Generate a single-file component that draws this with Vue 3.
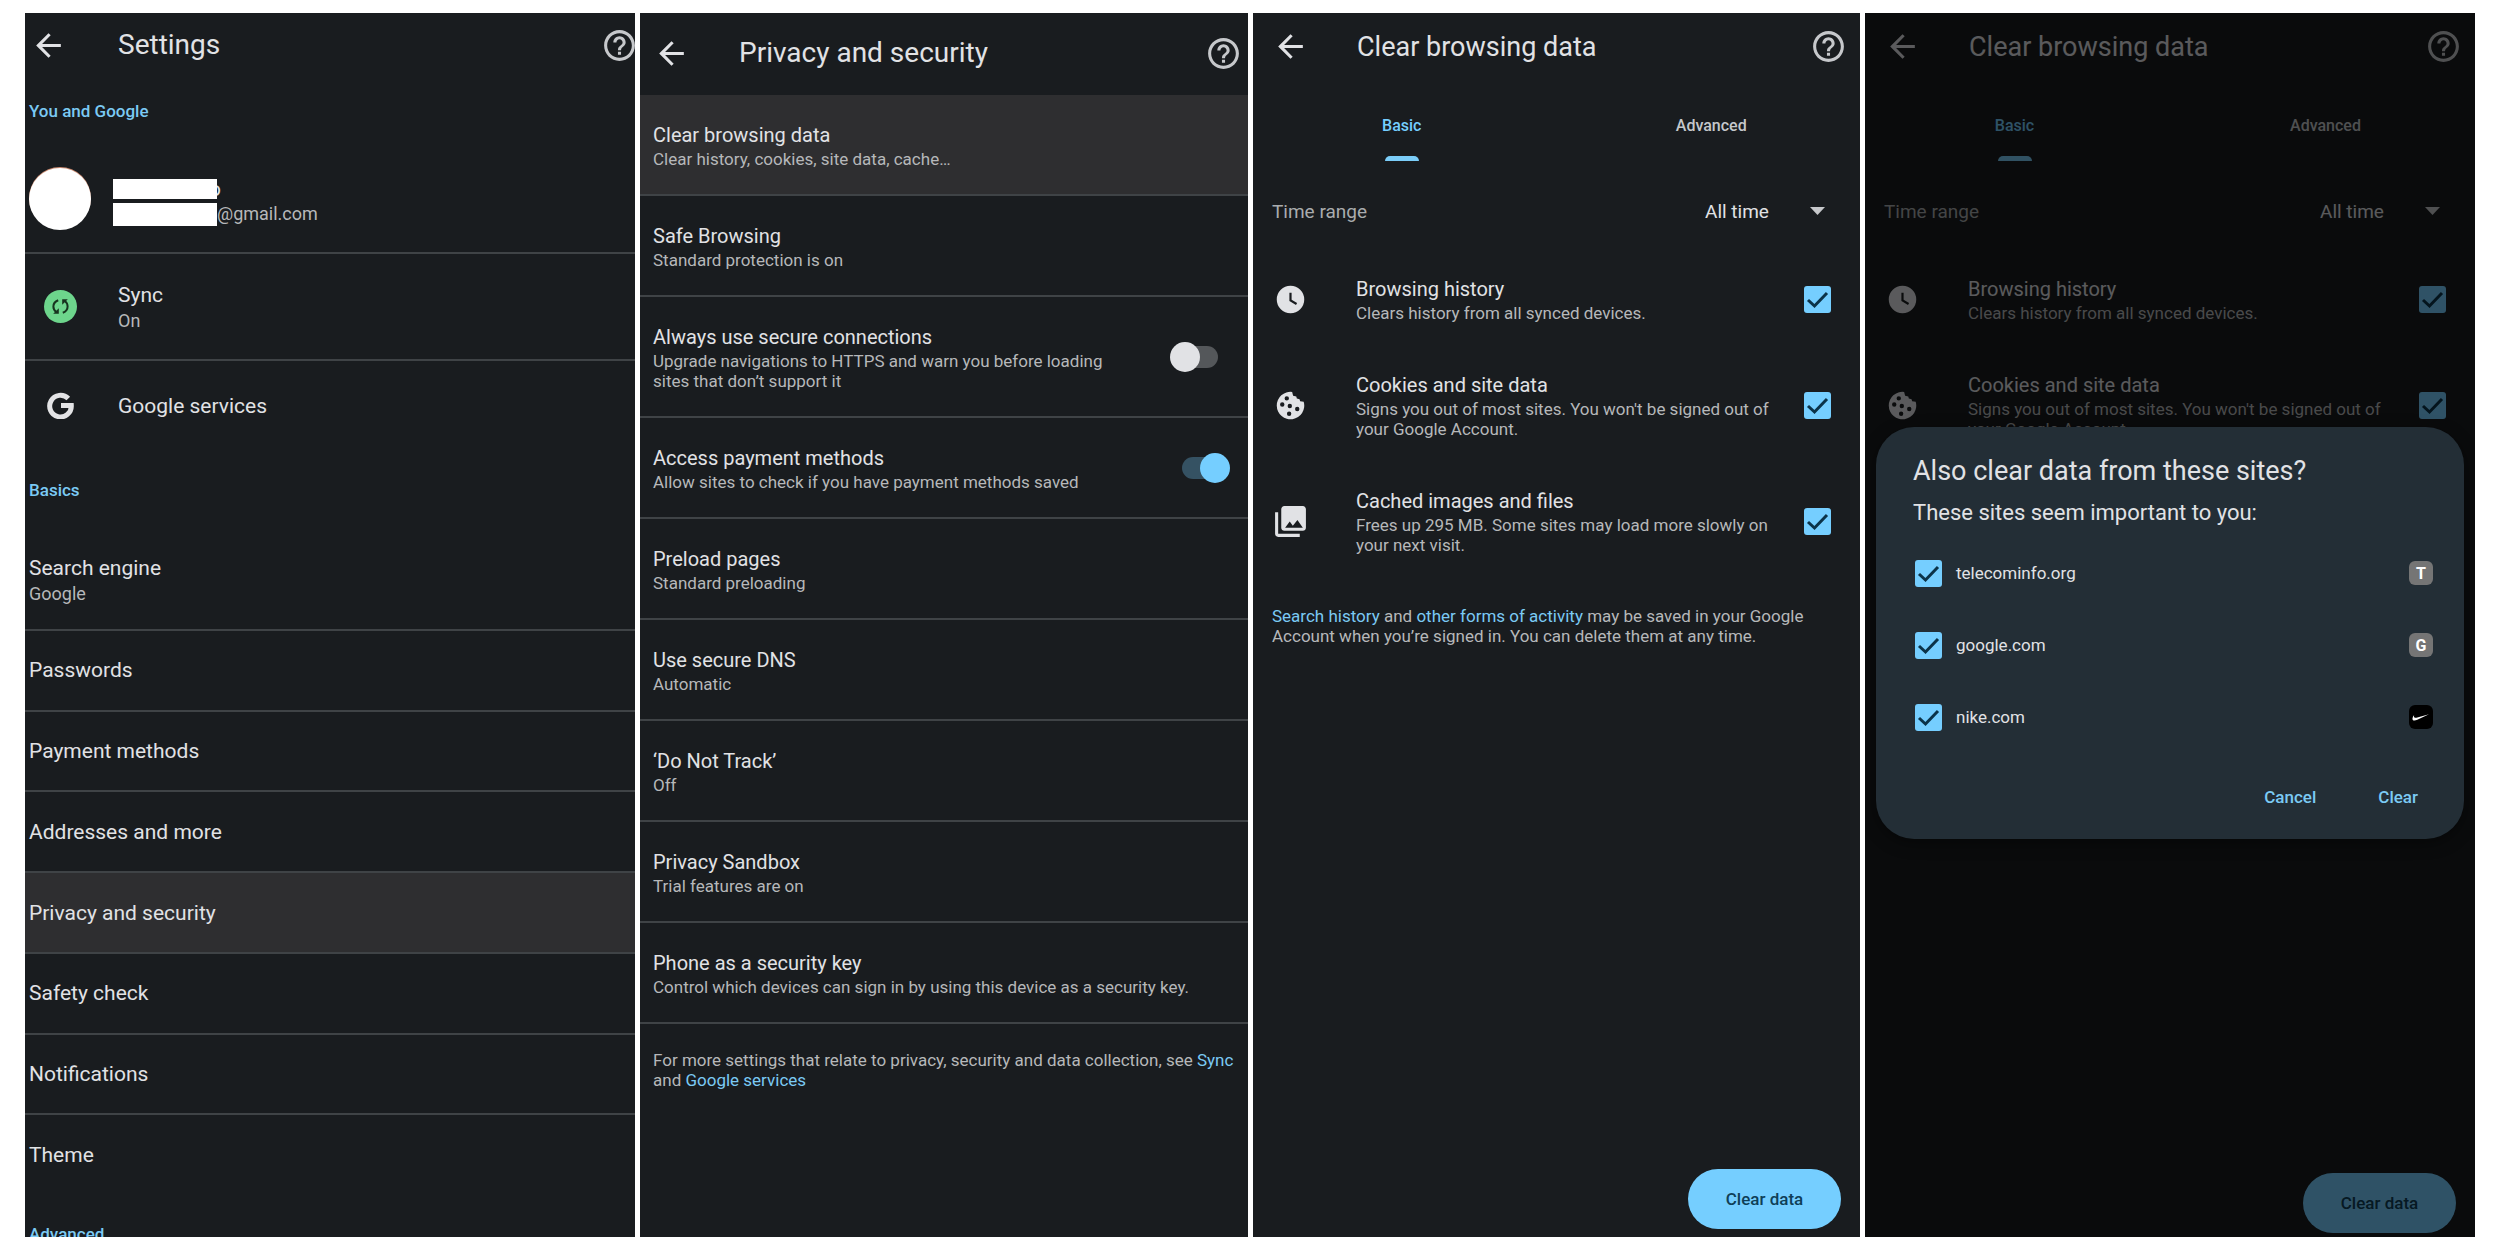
<template>
    <main class="board">
        <!-- Settings -->
        <section class="phone settings">
            <header class="appbar">
                <button class="icon-btn" aria-label="Back">
                    <svg class="icon" viewBox="0 0 24 24"><path :d="icons.back" /></svg>
                </button>
                <h1>Settings</h1>
                <button class="icon-btn help" aria-label="Help">
                    <svg class="icon" viewBox="0 0 24 24"><path :d="icons.help" /></svg>
                </button>
            </header>

            <h2 class="heading">You and Google</h2>
            <a href="#" class="row account">
                <span class="lead"><span class="avatar"></span></span>
                <span class="hidden-lines">
                    <span class="line who"><span class="mask name"></span>o</span>
                    <span class="line"><span class="mask address"></span>@gmail.com</span>
                </span>
            </a>
            <a href="#" class="row sync">
                <span class="lead">
                    <svg class="sync-icon" viewBox="0 0 33 33">
                        <circle cx="16.5" cy="16.5" r="16.5" fill="#6dd58c" />
                        <g fill="none" stroke="#17331f" stroke-width="2">
                            <path d="M14.2 10.2C10.6 11.6 9.4 13.8 9.4 16.5c0 2.4 1 4.2 2.8 5.5" />
                            <path d="M18.8 22.8c3.6-1.4 4.8-3.6 4.8-6.3 0-2.4-1-4.2-2.8-5.5" />
                        </g>
                        <path fill="#17331f" d="M9.2 23.8h5.6v-5.6zM23.8 9.2h-5.6v5.6z" />
                    </svg>
                </span>
                <span class="text">
                    <span class="title">Sync</span>
                    <span class="sub">On</span>
                </span>
            </a>
            <a href="#" class="row services">
                <span class="lead">
                    <svg class="g-icon" viewBox="0 0 27 27">
                        <path d="M21.3 6.600A10.800 10.800 0 1 0 24.300 13.500H14" fill="none" stroke="#e3e3e5" stroke-width="5" />
                    </svg>
                </span>
                <span class="text"><span class="title">Google services</span></span>
            </a>

            <h2 class="heading">Basics</h2>
            <a href="#" class="row engine">
                <span class="text">
                    <span class="title">Search engine</span>
                    <span class="sub">Google</span>
                </span>
            </a>
            <nav class="basics">
                <a
                    v-for="item in basics"
                    :key="item"
                    href="#"
                    class="row"
                    :class="{ active: item === 'Privacy and security' }"
                >
                    <span class="title">{{ item }}</span>
                </a>
            </nav>
            <h2 class="heading cut">Advanced</h2>
        </section>

        <!-- Privacy and security -->
        <section class="phone privacy">
            <header class="appbar">
                <button class="icon-btn" aria-label="Back">
                    <svg class="icon" viewBox="0 0 24 24"><path :d="icons.back" /></svg>
                </button>
                <h1>Privacy and security</h1>
                <button class="icon-btn help" aria-label="Help">
                    <svg class="icon" viewBox="0 0 24 24"><path :d="icons.help" /></svg>
                </button>
            </header>

            <template v-for="(item, i) in privacy" :key="item.title">
                <label v-if="'on' in item" class="row">
                    <span class="text">
                        <span class="title">{{ item.title }}</span>
                        <span class="sub">{{ item.sub }}</span>
                    </span>
                    <input v-model="item.on" type="checkbox" role="switch" class="switch" />
                </label>
                <a v-else href="#" class="row" :class="{ active: i === 0 }">
                    <span class="text">
                        <span class="title">{{ item.title }}</span>
                        <span class="sub">{{ item.sub }}</span>
                    </span>
                </a>
            </template>

            <p class="note">
                For more settings that relate to privacy, security and data collection, see
                <a href="#">Sync</a> and <a href="#">Google services</a>
            </p>
        </section>

        <!-- Clear browsing data, plain and with the dialog open -->
        <section
            v-for="screen in clearScreens"
            :key="screen.id"
            class="phone clear"
            :class="{ covered: screen.dialog }"
        >
            <header class="appbar">
                <button class="icon-btn" aria-label="Back">
                    <svg class="icon" viewBox="0 0 24 24"><path :d="icons.back" /></svg>
                </button>
                <h1>Clear browsing data</h1>
                <button class="icon-btn help" aria-label="Help">
                    <svg class="icon" viewBox="0 0 24 24"><path :d="icons.help" /></svg>
                </button>
            </header>

            <div class="tabs" role="tablist">
                <button role="tab" aria-selected="true" class="tab selected">Basic</button>
                <button role="tab" aria-selected="false" class="tab">Advanced</button>
            </div>

            <div class="range">
                <label :for="screen.id + '-range'">Time range</label>
                <span class="picker">
                    <select :id="screen.id + '-range'">
                        <option>All time</option>
                    </select>
                    <svg viewBox="0 0 15 8"><path d="M0 0h15L7.5 8z" /></svg>
                </span>
            </div>

            <label v-for="item in screen.entries" :key="item.title" class="entry">
                <svg class="entry-icon" :class="{ large: item.large }" viewBox="0 0 24 24">
                    <path :d="item.icon" fill-rule="evenodd" />
                </svg>
                <span class="text">
                    <span class="title">{{ item.title }}</span>
                    <span class="sub">{{ item.sub }}</span>
                </span>
                <span class="check">
                    <input type="checkbox" checked />
                    <svg viewBox="0 0 27 27"><path :d="icons.tick" /></svg>
                </span>
            </label>

            <p v-if="!screen.dialog" class="note">
                <a href="#">Search history</a> and <a href="#">other forms of activity</a> may be saved in your
                Google Account when you’re signed in. You can delete them at any time.
            </p>

            <button class="clear-btn">Clear data</button>

            <div v-if="screen.dialog" class="scrim">
                <div class="dialog" role="dialog" aria-labelledby="dialog-title">
                    <h2 id="dialog-title">Also clear data from these sites?</h2>
                    <p>These sites seem important to you:</p>
                    <label v-for="site in sites" :key="site.host" class="site">
                        <span class="check">
                            <input type="checkbox" checked />
                            <svg viewBox="0 0 27 27"><path :d="icons.tick" /></svg>
                        </span>
                        <span class="host">{{ site.host }}</span>
                        <span v-if="site.letter" class="badge">{{ site.letter }}</span>
                        <span v-else class="badge black">
                            <svg viewBox="0 0 24 24">
                                <path
                                    fill="#fff"
                                    d="M20 9.2L8.3 14.8C7.2 15.3 6.2 15.5 5.4 15.5 4 15.5 3.3 14.6 3.5 13.2 3.7 12.1 4.3 11 5.2 10c-.5 1.2-.3 2.4.7 2.7.7.2 1.5.1 2.4-.2z"
                                />
                            </svg>
                        </span>
                    </label>
                    <div class="actions">
                        <button>Cancel</button>
                        <button>Clear</button>
                    </div>
                </div>
            </div>
        </section>
    </main>
</template>

<script setup>
import { ref } from 'vue'

const icons = {
    back: 'M20 11H7.83l5.59-5.59L12 4l-8 8 8 8 1.41-1.41L7.83 13H20v-2z',
    help: 'M11 18h2v-2h-2v2zm1-16C6.48 2 2 6.48 2 12s4.48 10 10 10 10-4.48 10-10S17.52 2 12 2zm0 18c-4.41 0-8-3.59-8-8s3.59-8 8-8 8 3.59 8 8-3.59 8-8 8zm0-14c-2.21 0-4 1.79-4 4h2c0-1.1.9-2 2-2s2 .9 2 2c0 2-3 1.75-3 5h2c0-2.25 3-2.5 3-5 0-2.21-1.79-4-4-4z',
    tick: 'M4 14l6.500 6L23 7'
}

const basics = [
    'Passwords',
    'Payment methods',
    'Addresses and more',
    'Privacy and security',
    'Safety check',
    'Notifications',
    'Theme'
]

const privacy = ref([
    { title: 'Clear browsing data', sub: 'Clear history, cookies, site data, cache…' },
    { title: 'Safe Browsing', sub: 'Standard protection is on' },
    {
        title: 'Always use secure connections',
        sub: 'Upgrade navigations to HTTPS and warn you before loading sites that don’t support it',
        on: false
    },
    {
        title: 'Access payment methods',
        sub: 'Allow sites to check if you have payment methods saved',
        on: true
    },
    { title: 'Preload pages', sub: 'Standard preloading' },
    { title: 'Use secure DNS', sub: 'Automatic' },
    { title: '‘Do Not Track’', sub: 'Off' },
    { title: 'Privacy Sandbox', sub: 'Trial features are on' },
    {
        title: 'Phone as a security key',
        sub: 'Control which devices can sign in by using this device as a security key.'
    }
])

const entries = [
    {
        title: 'Browsing history',
        sub: 'Clears history from all synced devices.',
        icon: 'M12 2a10 10 0 1 0 0 20 10 10 0 0 0 0-20zM11.2 7h1.600v5.200l4 2.400-.8 1.400-4.800-2.900z'
    },
    {
        title: 'Cookies and site data',
        sub: "Signs you out of most sites. You won't be signed out of your Google Account.",
        // dough with the bite, then the five chips
        icon:
            'M13.2 2.1A10 10 0 1 0 21.6 9.2L19 8.9 18.6 7.4 16.6 6.9 16.2 5.500 13.9 4.900z' +
            'M9.300 5.200a1.600 1.600 0 1 1 0 3.200 1.600 1.600 0 0 1 0-3.200z' +
            'M6 9.700a1.600 1.600 0 1 1 0 3.200 1.600 1.600 0 0 1 0-3.200z' +
            'M11.500 10.800a1.600 1.600 0 1 1 0 3.200 1.600 1.600 0 0 1 0-3.200z' +
            'M16.900 12.900a1.600 1.600 0 1 1 0 3.200 1.600 1.600 0 0 1 0-3.200z' +
            'M11 16.400a1.600 1.600 0 1 1 0 3.200 1.600 1.600 0 0 1 0-3.200z'
    },
    {
        title: 'Cached images and files',
        sub: 'Frees up 295 MB. Some sites may load more slowly on your next visit.',
        large: true,
        icon: 'M22 16V4c0-1.100-.9-2-2-2H8c-1.100 0-2 .9-2 2v12c0 1.100.9 2 2 2h12c1.100 0 2-.9 2-2zM8.500 16l3-4 2 2.700L16.500 11l3.500 5H8.500zM2 6v14c0 1.100.9 2 2 2h14v-2H4V6H2z'
    }
]

const clearScreens = [
    { id: 'clear', dialog: false, entries },
    { id: 'confirm', dialog: true, entries: entries.slice(0, 2) }
]

const sites = [
    { host: 'telecominfo.org', letter: 'T' },
    { host: 'google.com', letter: 'G' },
    { host: 'nike.com' }
]
</script>

<style>
body {
    background: #fff;
}
</style>

<style scoped>
* {
    box-sizing: border-box;
}

.board {
    display: grid;
    grid-template-columns: 610fr 608fr 607fr 610fr;
    gap: 5px;
    height: 100vh;
    padding: 13px 25px;
    font-family: Roboto, "Liberation Sans", sans-serif;
    color: #e1e2e5;
}

.phone {
    position: relative;
    display: flex;
    flex-direction: column;
    min-width: 0;
    overflow: hidden;
    background: #191c1f;
}

h1,
h2,
p {
    margin: 0;
    font-weight: 400;
}

a {
    color: #7bcaf4;
    text-decoration: none;
}

button {
    border: 0;
    padding: 0;
    background: none;
    color: inherit;
    font: inherit;
}

.appbar {
    display: flex;
    flex: none;
    align-items: center;
}

.appbar h1 {
    flex: 1;
    font-size: 28px;
    line-height: 36px;
}

.icon-btn {
    display: flex;
}

.icon {
    width: 37px;
    height: 37px;
    fill: #e1e2e5;
}

.help .icon {
    fill: #c6c8cb;
}

.row {
    display: flex;
    flex: none;
    align-items: center;
    border-bottom: 2px solid #3f4346;
    color: inherit;
}

.row.active {
    background: #2e2e30;
}

.text {
    display: flex;
    flex: 1;
    flex-direction: column;
}

.title {
    font-size: 20px;
    line-height: 28px;
}

.sub,
.note {
    font-size: 17px;
    line-height: 20px;
    color: #b6b8ba;
}

/* settings list */
.settings .appbar {
    height: 58px;
    padding: 6px 0 0 5px;
}

.settings .appbar h1 {
    padding-left: 51px;
}

.settings .help {
    margin-right: -3px;
}

.settings .title {
    font-size: 21px;
}

.settings .sub {
    font-size: 18px;
    line-height: 24px;
}

.settings .row {
    padding-left: 4px;
}

.heading {
    flex: none;
    padding-left: 4px;
    font-size: 17px;
    font-weight: 500;
    line-height: 80px;
    color: #7bcaf4;
}

/* last heading runs past the bottom of the screen */
.heading.cut {
    margin-bottom: -37px;
}

.lead {
    display: flex;
    justify-content: center;
    width: 62px;
    margin-right: 27px;
}

.account {
    height: 103px;
    padding-bottom: 6px;
}

.account .lead {
    margin-right: 22px;
}

.avatar {
    width: 62px;
    height: 62px;
    border-radius: 50%;
    background: #fff;
    box-shadow: 0 -1px 0 #c98a70;
}

.hidden-lines {
    display: flex;
    flex-direction: column;
    gap: 3px;
    padding-top: 6px;
}

.line {
    display: flex;
    align-items: center;
    font-size: 18px;
    line-height: 22px;
    color: #b6b8ba;
}

.line.who {
    font-size: 21px;
    color: #e1e2e5;
}

.mask {
    z-index: 1;
    width: 104px;
    background: #fff;
}

.mask.name {
    height: 20px;
    margin-right: -8px;
}

.mask.address {
    height: 23px;
}

.sync {
    height: 107px;
}

.sync-icon {
    width: 33px;
    height: 33px;
}

.g-icon {
    width: 27px;
    height: 27px;
}

.settings .services {
    height: 89px;
    border-bottom: 0;
}

.engine {
    height: 101px;
}

.basics {
    display: flex;
    flex: 1;
    flex-direction: column;
}

.basics .row {
    flex: 1;
}

.basics .row:last-child {
    border-bottom: 0;
}

/* privacy list */
.privacy .appbar {
    height: 82px;
    padding: 0 6px 2px 13px;
}

.privacy .appbar h1 {
    padding-left: 49px;
}

.privacy .row {
    padding: 26px 30px 25px 13px;
}

.privacy label .text {
    padding-right: 60px;
}

.privacy .note {
    padding: 26px 13px;
}

.switch {
    position: relative;
    flex: none;
    width: 36px;
    height: 22px;
    margin: 0;
    border-radius: 11px;
    background: #54575a;
    appearance: none;
}

.switch::before {
    content: "";
    position: absolute;
    top: -4px;
    left: -12px;
    width: 30px;
    height: 30px;
    border-radius: 50%;
    background: #e1e2e5;
}

.switch:checked {
    background: #355263;
}

.switch:checked::before {
    left: 18px;
    background: #75ceff;
}

/* clear browsing data */
.clear .appbar {
    height: 67px;
    padding: 0 13px 0 19px;
}

.clear .appbar h1 {
    padding-left: 48px;
    font-size: 27px;
}

.tabs {
    display: flex;
    flex: none;
    height: 81px;
    margin: 0 -6px;
}

.tab {
    display: flex;
    flex: 1;
    flex-direction: column;
    align-items: center;
    padding-top: 36px;
    font-size: 16px;
    font-weight: 500;
    line-height: 20px;
    color: #c5c8cb;
}

.tab.selected {
    color: #75ceff;
}

.tab.selected::after {
    content: "";
    width: 34px;
    height: 5px;
    margin-top: 20px;
    border-radius: 5px 5px 0 0;
    background: #7bcdf8;
}

.range {
    display: flex;
    flex: none;
    align-items: center;
    justify-content: space-between;
    height: 90px;
    padding: 10px 35px 0 19px;
    font-size: 19px;
    color: #a9acae;
}

.picker {
    display: grid;
    align-items: center;
}

.picker select {
    grid-area: 1 / 1;
    border: 0;
    padding: 0 56px 0 0;
    background: none;
    color: #e1e2e5;
    font: inherit;
    appearance: none;
}

.picker svg {
    grid-area: 1 / 1;
    justify-self: end;
    width: 15px;
    height: 8px;
    fill: #c6c8cb;
    pointer-events: none;
}

.entry {
    display: flex;
    flex: none;
    align-items: center;
    padding: 24px 29px 24px 19px;
}

.entry-icon {
    flex: none;
    width: 33px;
    height: 33px;
    margin: 0 49px 0 2px;
    fill: #e1e2e5;
}

.entry-icon.large {
    width: 37px;
    height: 37px;
    margin: 0 47px 0 0;
}

.entry .text {
    padding-right: 30px;
}

.check {
    display: grid;
    flex: none;
    width: 27px;
    height: 27px;
}

.check input {
    grid-area: 1 / 1;
    width: 27px;
    height: 27px;
    margin: 0;
    border-radius: 3px;
    background: #75ceff;
    appearance: none;
}

.check svg {
    grid-area: 1 / 1;
    fill: none;
    stroke: #0b3349;
    stroke-width: 3;
    pointer-events: none;
}

.clear .note {
    padding: 27px 40px 0 19px;
}

.clear-btn {
    align-self: flex-end;
    flex: none;
    width: 153px;
    height: 60px;
    margin: auto 19px 8px;
    border-radius: 30px;
    background: #75ceff;
    color: #0f3f57;
    font-size: 17px;
    font-weight: 500;
}

.covered .clear-btn {
    margin-bottom: 4px;
}

/* dialog */
.scrim {
    position: absolute;
    inset: 0;
    z-index: 2;
    display: flex;
    align-items: center;
    padding: 16px 11px 0;
    background: rgba(0, 0, 0, 0.6);
}

.dialog {
    flex: 1;
    padding: 28px 31px 20px 37px;
    border-radius: 38px;
    background: #232e36;
    box-shadow: 0 4px 16px rgba(0, 0, 0, 0.4);
}

.dialog h2 {
    font-size: 27px;
    line-height: 32px;
}

.dialog p {
    margin: 12px 0 10px;
    font-size: 22px;
    line-height: 28px;
}

.site {
    display: flex;
    align-items: center;
    gap: 14px;
    height: 72px;
    padding-left: 2px;
    font-size: 17px;
}

.host {
    flex: 1;
}

.badge {
    display: flex;
    align-items: center;
    justify-content: center;
    width: 24px;
    height: 24px;
    border-radius: 6px;
    background: #757575;
    color: #fff;
    font-size: 16px;
    font-weight: 700;
}

.badge.black {
    background: #000;
}

.actions {
    display: flex;
    justify-content: flex-end;
    gap: 14px;
    margin: 22px -9px 0 0;
    font-size: 17px;
    font-weight: 500;
    color: #7bcaf4;
}

.actions button {
    height: 44px;
    padding: 0 24px;
}
</style>
